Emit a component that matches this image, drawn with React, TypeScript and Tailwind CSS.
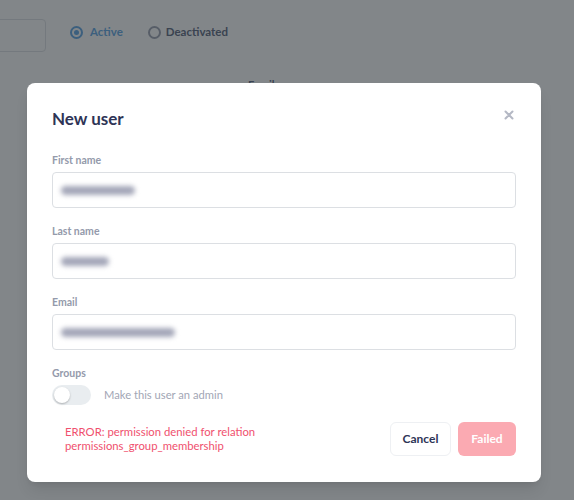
import { useState } from "react";

function Field({ label, blob }: { label: string; blob: string }) {
  return (
    <div className="mb-[15px]">
      <label className="mb-1 block text-[10.5px] font-bold leading-4 text-[#949aab]">{label}</label>
      <div className="flex h-9 items-center rounded border border-[#dcdfe3] bg-white px-2">
        {/* blurred value from the screenshot */}
        <div className={`h-[9px] rounded-full bg-[#a3a6b8] blur-[2.5px] ${blob}`} />
      </div>
    </div>
  );
}

export default function App() {
  const [admin, setAdmin] = useState(false);

  return (
    <div className="relative h-[500px] w-full overflow-hidden bg-white font-['Lato','Noto_Sans',sans-serif]">
      {/* Page behind the modal */}
      <div className="flex items-start pt-[19px]">
        <div className="-ml-4 h-[33px] w-[62px] rounded border border-[#dcdfe3]" />
        <div className="ml-6 mt-[6px] flex items-center gap-[7px] text-[11.5px] font-bold leading-[14px] text-[#509ee3]">
          <span className="flex h-[13px] w-[13px] items-center justify-center rounded-full border-2 border-[#509ee3]">
            <span className="h-[5px] w-[5px] rounded-full bg-[#509ee3]" />
          </span>
          Active
        </div>
        <div className="ml-[25px] mt-[6px] flex items-center gap-[5px] text-[11.5px] font-bold leading-[14px] text-[#4c5773]">
          <span className="h-[13px] w-[13px] rounded-full border-2 border-[#949aab]" />
          Deactivated
        </div>
      </div>
      <div className="pl-[248px] pt-[25px] text-[11px] font-bold text-[#4c5773]">Email</div>

      {/* Modal */}
      <div className="absolute inset-0 bg-[#2e353b]/60 pl-[27px] pt-[83px]">
        <div className="w-[514px] rounded-lg bg-white px-[25px] pb-[26px] pt-6 shadow-lg">
          <div className="mb-[21px] flex items-center justify-between">
            <h2 className="text-[17px] font-bold leading-6 text-[#2e3456]">New user</h2>
            <button className="-mt-2 mr-[2px] text-[#b4b8c4]">
              <svg width="10" height="10" viewBox="0 0 10 10" fill="none" stroke="currentColor" strokeWidth="2" strokeLinecap="round">
                <path d="M1.5 1.5l7 7M8.5 1.5l-7 7" />
              </svg>
            </button>
          </div>

          <Field label="First name" blob="w-[74px]" />
          <Field label="Last name" blob="w-[48px]" />
          <Field label="Email" blob="w-[114px]" />

          <label className="mb-1 block text-[10.5px] font-bold leading-4 text-[#949aab]">Groups</label>
          <div className="flex items-center gap-[13px]">
            <button
              onClick={() => setAdmin(!admin)}
              className={`flex h-[20px] w-[39px] items-center rounded-full p-[2px] ${admin ? "justify-end bg-[#509ee3]" : "bg-[#e9edf0]"}`}
            >
              <span className="h-4 w-4 rounded-full bg-white shadow-[0_1px_2px_rgba(0,0,0,0.25)]" />
            </button>
            <span className="text-[11.2px] text-[#a2a6b5]">Make this user an admin</span>
          </div>

          <div className="mt-[17px] flex items-center justify-between">
            <p className="pl-[13px] text-[11.3px] leading-[14px] text-[#f0506e]">
              ERROR: permission denied for relation
              <br />
              permissions_group_membership
            </p>
            <div className="flex gap-[7px]">
              <button className="h-[34px] w-[61px] rounded-md border border-[#eef0f3] bg-white text-[12px] font-bold text-[#2e3456]">
                Cancel
              </button>
              <button className="h-[34px] w-[58px] rounded-md bg-[#fbaab2] text-[12px] font-bold text-white">
                Failed
              </button>
            </div>
          </div>
        </div>
      </div>
    </div>
  );
}
